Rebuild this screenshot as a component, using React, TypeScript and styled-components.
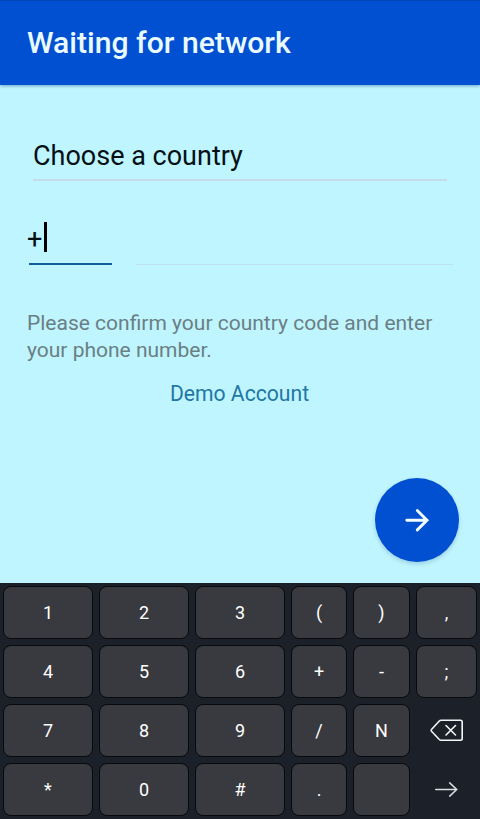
import React from "react";
import styled, { createGlobalStyle } from "styled-components";

const GlobalStyle = createGlobalStyle`
  *, *::before, *::after { box-sizing: border-box; }
  body { margin: 0; background: #bff5ff; font-family: Roboto, sans-serif; }
  button { font-family: inherit; border: 0; padding: 0; margin: 0; }
`;

const Screen = styled.div`
  width: 480px;
  height: 819px;
  display: flex;
  flex-direction: column;
  overflow: hidden;
  background: #bff5ff;
`;

const AppBar = styled.header`
  flex: none;
  height: 85px;
  padding: 0 27px;
  display: flex;
  align-items: center;
  background: #0250d2;
  border-top: 1px solid #0245b4;
  box-shadow: 0 1px 3px rgba(0, 40, 120, 0.4);
`;

const Title = styled.h1`
  margin: 0;
  font-size: 30.15px;
  line-height: 36px;
  font-weight: 500;
  color: #e9fbff;
  white-space: nowrap;
`;

const Form = styled.main`
  flex: 1;
  min-height: 0;
  display: flex;
  flex-direction: column;
`;

const CountryPicker = styled.div`
  height: 45px;
  margin: 51px 33px 0;
  padding-top: 4px;
  border-bottom: 2px solid #c6dde7;
  font-size: 27px;
  line-height: 32px;
  color: #051015;
`;

const PhoneRow = styled.div`
  display: flex;
  align-items: flex-end;
  height: 84px;
  padding-left: 29px;
  gap: 24px;
`;

const CodeField = styled.div`
  width: 83px;
  height: 46px;
  display: flex;
  align-items: flex-start;
  border-bottom: 2px solid #115d98;
  font-size: 27px;
  line-height: 40px;
  color: #051015;
`;

const CodeText = styled.span`
  margin-left: -2px;
`;

const Caret = styled.span`
  width: 3px;
  height: 30px;
  margin-top: 3px;
  margin-left: 2px;
  background: #000;
`;

const NumberField = styled.div`
  width: 317px;
  height: 46px;
  border-bottom: 1px solid #bee3ee;
`;

const Hint = styled.p`
  margin: 45px 27px 0;
  font-size: 21px;
  line-height: 27px;
  color: #6a7f83;
  white-space: nowrap;
`;

const DemoLink = styled.a`
  align-self: center;
  margin-top: 16px;
  margin-right: 1px;
  font-size: 21.15px;
  line-height: 28px;
  color: #2377a4;
`;

const NextButton = styled.button`
  align-self: flex-end;
  width: 84px;
  height: 84px;
  margin: auto 21px 21px 0;
  border-radius: 50%;
  display: flex;
  align-items: center;
  justify-content: center;
  background: #0250d2;
  box-shadow: 0 2px 4px rgba(0, 50, 110, 0.2);
`;

const Keypad = styled.section`
  flex: none;
  height: 236px;
  padding: 3px;
  display: grid;
  grid-template-columns: 90px 90px 90px 56px 57px 61px;
  grid-template-rows: repeat(4, 53px);
  gap: 6px;
  background: #1c2129;
`;

const Key = styled.button<{ $bare?: boolean }>`
  display: flex;
  align-items: center;
  justify-content: center;
  border-radius: 8px;
  border: 1px solid ${(p) => (p.$bare ? "transparent" : "#08090d")};
  background: ${(p) => (p.$bare ? "transparent" : "#393a3f")};
  color: #fff;
  font-size: 18px;
  line-height: 22px;
`;

const BackspaceIcon = () => (
  <svg width="34" height="24" viewBox="0 0 34 24" fill="none" stroke="#f4f5f7" strokeWidth="1.6" strokeLinejoin="round" strokeLinecap="round">
    <path d="M11 1.3H30.5Q32.2 1.3 32.2 3V19.5Q32.2 21.2 30.5 21.2H11Q10 21.2 9.3 20.5L1.5 12.2Q.9 11.3 1.5 10.5L9.3 2Q10 1.3 11 1.3Z" />
    <path d="M16 6.5l9.5 9.5M25.5 6.5L16 16" />
  </svg>
);

const EnterIcon = () => (
  <svg width="24" height="16" viewBox="0 0 24 16" fill="none" stroke="#d9dce0" strokeWidth="1.5" strokeLinecap="round">
    <path d="M.7 7.5H21.7M14.7 .9L21.7 7.5L14.7 14.1" />
  </svg>
);

const NextIcon = () => (
  <svg width="26" height="26" viewBox="0 0 26 26" fill="none" stroke="#f2fdff" strokeWidth="2.9" strokeLinecap="round">
    <path d="M2.8 13.2H23M13.3 3.5L23 13.2L13.3 22.9" />
  </svg>
);

const keys: { id: string; face: React.ReactNode; bare?: boolean }[] = [
  ..."123(),456+-;789/N".split("").map((c) => ({ id: c, face: c })),
  { id: "backspace", face: <BackspaceIcon />, bare: true },
  ..."*0#.".split("").map((c) => ({ id: c, face: c })),
  { id: "space", face: "" },
  { id: "enter", face: <EnterIcon />, bare: true },
];

export default function App() {
  return (
    <>
      <GlobalStyle />
      <Screen>
        <AppBar>
          <Title>Waiting for network</Title>
        </AppBar>
        <Form>
          <CountryPicker>Choose a country</CountryPicker>
          <PhoneRow>
            <CodeField>
              <CodeText>+</CodeText>
              <Caret />
            </CodeField>
            <NumberField />
          </PhoneRow>
          <Hint>
            Please confirm your country code and enter
            <br />
            your phone number.
          </Hint>
          <DemoLink>Demo Account</DemoLink>
          <NextButton aria-label="Next">
            <NextIcon />
          </NextButton>
        </Form>
        <Keypad>
          {keys.map((k) => (
            <Key key={k.id} $bare={k.bare} aria-label={k.id}>
              {k.face}
            </Key>
          ))}
        </Keypad>
      </Screen>
    </>
  );
}
